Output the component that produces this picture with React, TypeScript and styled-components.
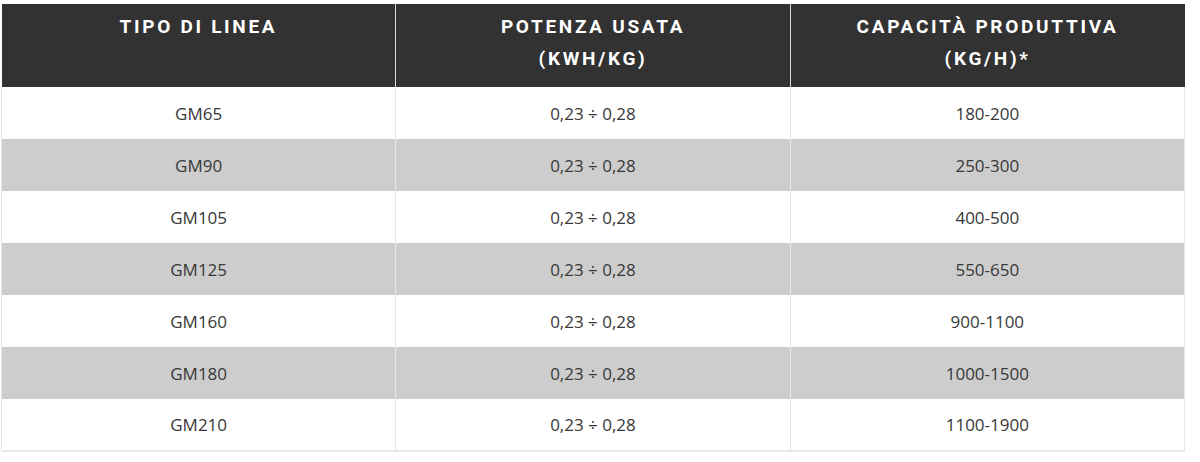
import React from "react";
import styled, { createGlobalStyle } from "styled-components";

const GlobalStyle = createGlobalStyle`
  html, body {
    margin: 0;
    padding: 0;
    background: #fff;
  }
`;

const Wrapper = styled.div`
  padding: 4px 15px 0 1px;
`;

const Table = styled.table`
  width: 1184px;
  border-collapse: collapse;
  table-layout: fixed;
  border-bottom: 2px solid #e8e8e8;
`;

const HeadCell = styled.th`
  background: #323232;
  color: #fff;
  font-family: Roboto, "Liberation Sans", sans-serif;
  font-weight: 700;
  font-size: 19px;
  letter-spacing: 2.7px;
  line-height: 32px;
  text-transform: uppercase;
  text-align: center;
  vertical-align: top;
  height: 83px;
  box-sizing: border-box;
  padding: 7px 10px 0;
  border-left: 1px solid #d8d8d8;

  &:first-child {
    border-left: none;
  }
`;

const Row = styled.tr<{ $shaded: boolean }>`
  background: ${(p) => (p.$shaded ? "#cdcdcd" : "#fff")};
`;

const Cell = styled.td`
  height: 52px;
  box-sizing: border-box;
  padding: 0 10px;
  text-align: center;
  vertical-align: middle;
  font-family: "Open Sans", "Liberation Sans", sans-serif;
  font-size: 17px;
  color: #383838;
  border-left: 1px solid #e6e6e6;
  border-right: 1px solid #e6e6e6;
`;

const rows = [
  ["GM65", "180-200"],
  ["GM90", "250-300"],
  ["GM105", "400-500"],
  ["GM125", "550-650"],
  ["GM160", "900-1100"],
  ["GM180", "1000-1500"],
  ["GM210", "1100-1900"],
];

export default function App() {
  return (
    <>
      <GlobalStyle />
      <Wrapper>
        <Table>
          <thead>
            <tr>
              <HeadCell>Tipo di linea</HeadCell>
              <HeadCell>
                Potenza usata
                <br />
                (kWh/kg)
              </HeadCell>
              <HeadCell>
                Capacità produttiva
                <br />
                (kg/h)*
              </HeadCell>
            </tr>
          </thead>
          <tbody>
            {rows.map(([line, cap], i) => (
              <Row key={line} $shaded={i % 2 === 1}>
                <Cell>{line}</Cell>
                <Cell>0,23 ÷ 0,28</Cell>
                <Cell>{cap}</Cell>
              </Row>
            ))}
          </tbody>
        </Table>
      </Wrapper>
    </>
  );
}
